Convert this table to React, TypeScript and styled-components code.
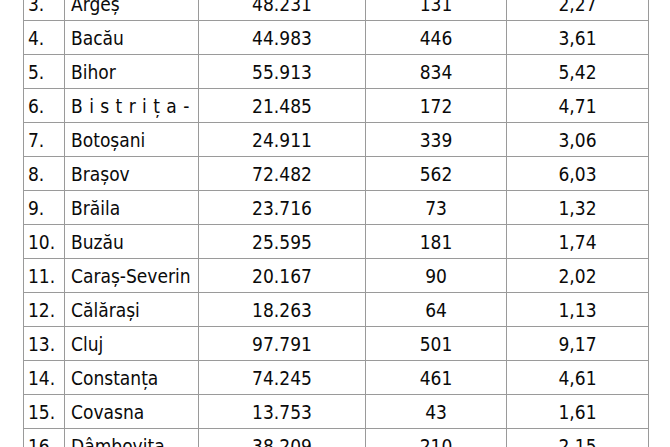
import React from "react";
import styled, { createGlobalStyle } from "styled-components";

const GlobalStyle = createGlobalStyle`
  html, body {
    margin: 0;
    padding: 0;
    background: #ffffff;
  }
  body {
    overflow: hidden;
  }
`;

const Page = styled.div`
  width: 670px;
  height: 447px;
  overflow: hidden;
  background: #ffffff;
`;

const Table = styled.div`
  margin-top: -14px;
  margin-left: 23px;
  width: 626px;
  border-left: 1px solid #9a9a9a;
  border-top: 1px solid #9a9a9a;
  font-family: "DejaVu Sans Condensed", "DejaVu Sans", sans-serif;
  font-stretch: condensed;
  font-size: 19px;
  color: #0a0a0a;
`;

const Row = styled.div`
  display: grid;
  grid-template-columns: 41px 134px 167px 141px 142px;
  height: 34px;
`;

const Cell = styled.div<{ $align?: "left" | "center"; $pad?: number; $spread?: boolean }>`
  box-sizing: border-box;
  height: 34px;
  border-right: 1px solid #9a9a9a;
  border-bottom: 1px solid #9a9a9a;
  display: flex;
  align-items: center;
  justify-content: ${(p) => (p.$align === "center" ? "center" : "flex-start")};
  padding-left: ${(p) => (p.$pad ?? 0)}px;
  padding-top: 1px;
  white-space: nowrap;
  overflow: hidden;
  letter-spacing: ${(p) => (p.$spread ? "6.4px" : "0")};
`;

type Item = [string, string, string, string, string, boolean?];

const rows: Item[] = [
  ["3.", "Argeș", "48.231", "131", "2,27"],
  ["4.", "Bacău", "44.983", "446", "3,61"],
  ["5.", "Bihor", "55.913", "834", "5,42"],
  ["6.", "Bistrița-", "21.485", "172", "4,71", true],
  ["7.", "Botoșani", "24.911", "339", "3,06"],
  ["8.", "Brașov", "72.482", "562", "6,03"],
  ["9.", "Brăila", "23.716", "73", "1,32"],
  ["10.", "Buzău", "25.595", "181", "1,74"],
  ["11.", "Caraș-Severin", "20.167", "90", "2,02"],
  ["12.", "Călărași", "18.263", "64", "1,13"],
  ["13.", "Cluj", "97.791", "501", "9,17"],
  ["14.", "Constanța", "74.245", "461", "4,61"],
  ["15.", "Covasna", "13.753", "43", "1,61"],
  ["16.", "Dâmbovița", "38.209", "210", "2,15"],
];

export default function App() {
  return (
    <Page>
      <GlobalStyle />
      <Table>
        {rows.map(([n, name, a, b, c, spread]) => (
          <Row key={n}>
            <Cell $pad={4}>{n}</Cell>
            <Cell $pad={6} $spread={spread}>{name}</Cell>
            <Cell $align="center">{a}</Cell>
            <Cell $align="center">{b}</Cell>
            <Cell $align="center">{c}</Cell>
          </Row>
        ))}
      </Table>
    </Page>
  );
}
